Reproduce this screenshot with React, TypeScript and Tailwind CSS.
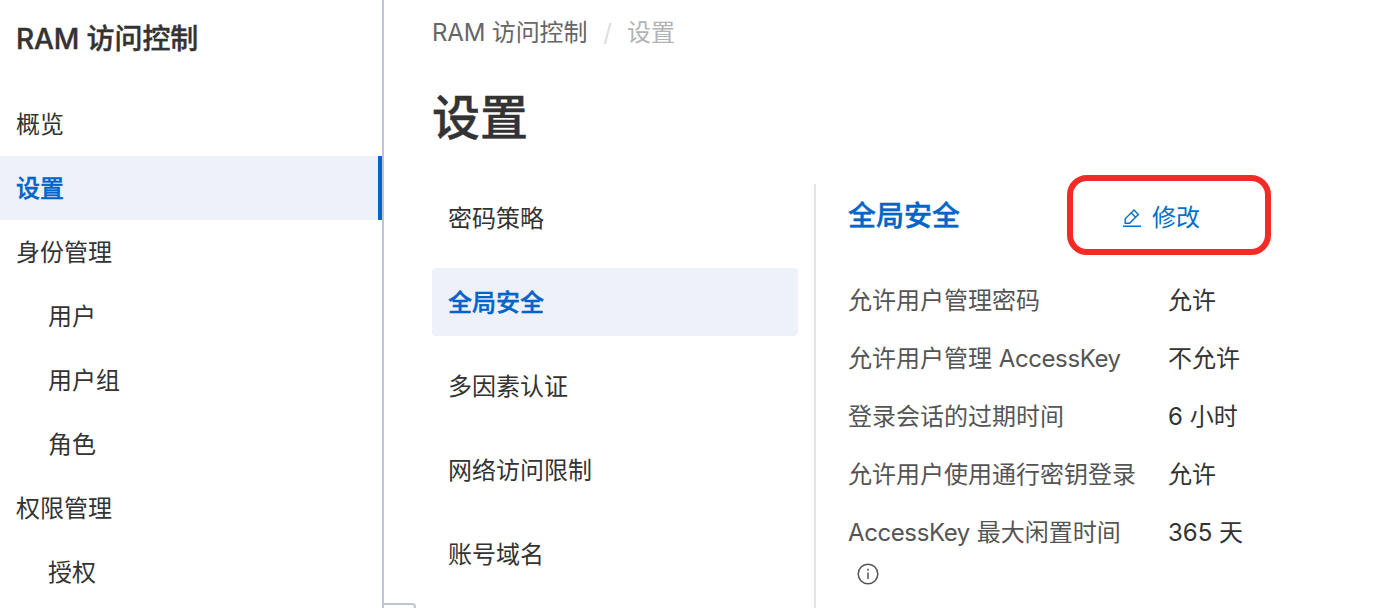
const navItems = [
  { label: '概览' },
  { label: '设置', active: true },
  { label: '身份管理' },
  { label: '用户', child: true },
  { label: '用户组', child: true },
  { label: '角色', child: true },
  { label: '权限管理' },
  { label: '授权', child: true },
]

const tabs = ['密码策略', '全局安全', '多因素认证', '网络访问限制', '账号域名']

const accessKey = <span className="tracking-[-0.4px]">AccessKey</span>

const settings = [
  { id: 'password', label: '允许用户管理密码', value: '允许' },
  { id: 'accessKey', label: <>允许用户管理 {accessKey}</>, value: '不允许' },
  { id: 'session', label: '登录会话的过期时间', value: '6 小时' },
  { id: 'passkey', label: '允许用户使用通行密钥登录', value: '允许' },
  { id: 'idle', label: <>{accessKey} 最大闲置时间</>, value: '365 天', info: true },
]

function Sidebar() {
  return (
    <aside className="relative w-96 shrink-0 border-r-2 border-[#c0c5d1]">
      <h2 className="h-[92px] pl-4 pt-[19px] text-[28px] leading-10 font-medium tracking-[-0.1px] [-webkit-text-stroke:0.4px]">
        RAM 访问控制
      </h2>
      <nav>
        {navItems.map(item => (
          <a
            key={item.label}
            className={`flex h-16 items-center pt-0.5 ${item.child ? 'pl-12' : 'pl-4'} ${
              item.active
                ? 'border-r-4 border-[#0064c8] bg-[#eef1fa] font-medium text-[#0064c8] [-webkit-text-stroke:0.4px]'
                : ''
            }`}
          >
            {item.label}
          </a>
        ))}
      </nav>
      {/* Collapse handle */}
      <div className="absolute -right-[34px] top-[603px] h-16 w-[34px] rounded-tr border-2 border-[#c0c5d1] bg-white" />
    </aside>
  )
}

function EditIcon() {
  return (
    <svg width="20" height="20" viewBox="0 0 20 20" fill="none" stroke="currentColor" strokeWidth="1.4">
      <path d="M3.2 15.2v-4.4L12 2l4.4 4.4-8.8 8.8H3.2ZM9.2 4.8l4.4 4.4M1 18.3h18" />
    </svg>
  )
}

function InfoIcon() {
  return (
    <svg width="22" height="22" viewBox="0 0 22 22" fill="none" stroke="currentColor" strokeWidth="1.5">
      <circle cx="11" cy="11" r="9.8" />
      <path d="M11 9.5v6.5M11 5.8v2" />
    </svg>
  )
}

export default function App() {
  return (
    <div className="flex h-[608px] w-[1396px] overflow-hidden bg-white font-[Inter,'Noto_Sans_CJK_SC',sans-serif] text-2xl text-[#333]">
      <Sidebar />
      <main className="flex-1 pl-12">
        <div className="flex h-16 items-center gap-4 pt-0.5 text-[#666]">
          <span className="tracking-[-0.15px]">RAM 访问控制</span>
          <span className="text-[#ddd]">/</span>
          <span className="-ml-px text-[#b3b3b3]">设置</span>
        </div>
        <h1 className="h-[120px] pt-[22px] text-5xl leading-[64px] font-medium [-webkit-text-stroke:0.4px]">设置</h1>
        <div className="flex h-[424px]">
          <div className="flex w-[384px] flex-col gap-4 border-r-2 border-[#e3e4e6] pr-4">
            {tabs.map(tab => (
              <a
                key={tab}
                className={`flex h-[68px] shrink-0 items-center rounded pl-4 pt-0.5 ${
                  tab === '全局安全'
                    ? 'bg-[#eef1fa] font-medium text-[#0064c8] [-webkit-text-stroke:0.4px]'
                    : ''
                }`}
              >
                {tab}
              </a>
            ))}
          </div>
          <section className="pl-8">
            <div className="-mt-[9px] flex h-20 items-center">
              <h3 className="w-[219px] pt-1 text-[28px] font-medium text-[#0064c8] [-webkit-text-stroke:0.4px]">
                全局安全
              </h3>
              <div className="flex h-20 w-[204px] items-center gap-2.5 rounded-[20px] border-[6px] border-[#f22b27] pl-[49px] pt-1.5 text-[#0070cc]">
                <EditIcon />
                修改
              </div>
            </div>
            <dl className="mt-[26px]">
              {settings.map(row => (
                <div key={row.id} className="mb-[18px] flex leading-10">
                  <dt className="w-80 text-[#555]">
                    {row.label}
                    {row.info && (
                      <span className="ml-[9px] mt-2.5 block">
                        <InfoIcon />
                      </span>
                    )}
                  </dt>
                  <dd>{row.value}</dd>
                </div>
              ))}
            </dl>
          </section>
        </div>
      </main>
    </div>
  )
}
